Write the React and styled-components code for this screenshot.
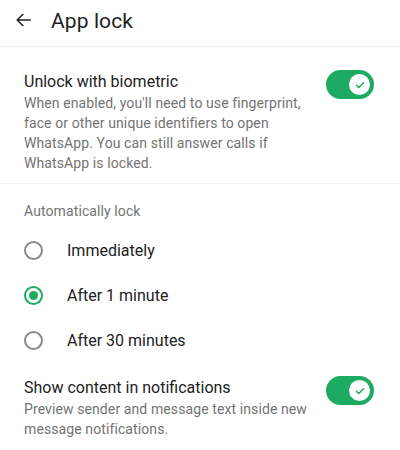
import styled, { createGlobalStyle } from "styled-components";

const GlobalStyle = createGlobalStyle`
  body {
    margin: 0;
    background: #ffffff;
    font-family: Roboto, "Noto Sans", sans-serif;
    color: #222222;
  }
`;

const Page = styled.div`
  width: 400px;
  height: 450px;
  overflow: hidden;
  background: #ffffff;
`;

const TopBar = styled.header`
  display: flex;
  align-items: center;
  height: 47px;
  padding: 0 0 0 14px;
  border-bottom: 1px solid #f1f1f1;
  box-sizing: border-box;
`;

const BackButton = styled.button`
  display: flex;
  align-items: center;
  justify-content: center;
  width: 20px;
  height: 20px;
  padding: 0;
  margin: -6px 17px 0 0;
  border: none;
  background: none;
  color: #222222;
`;

const Title = styled.h1`
  margin: -4px 0 0;
  font-size: 21px;
  font-weight: 400;
  letter-spacing: 0.1px;
  color: #222222;
`;

const Section = styled.section`
  display: flex;
  align-items: flex-start;
  gap: 16px;
  padding: ${(p) => p.$pad || "24px 24px 10px"};
  border-bottom: ${(p) => (p.$divider ? "1px solid #f1f1f1" : "none")};
`;

const TextBlock = styled.div`
  flex: 1;
`;

const ItemTitle = styled.div`
  font-size: 16px;
  line-height: 22px;
  color: #222222;
`;

const ItemDesc = styled.div`
  font-size: 14px;
  line-height: 20px;
  color: #737373;
  letter-spacing: 0.1px;
`;

const Track = styled.div`
  position: relative;
  flex-shrink: 0;
  width: 48px;
  height: 29px;
  margin-top: ${(p) => p.$top || 0}px;
  margin-right: 2px;
  border-radius: 15px;
  background: #1daa61;
`;

const Knob = styled.div`
  position: absolute;
  right: 4px;
  top: 4px;
  width: 21px;
  height: 21px;
  border-radius: 50%;
  background: #ffffff;
  display: flex;
  align-items: center;
  justify-content: center;
`;

const Group = styled.div`
  padding: 17px 0 0;
`;

const GroupLabel = styled.div`
  padding: 0 24px;
  font-size: 14px;
  line-height: 20px;
  color: #737373;
  letter-spacing: 0.1px;
`;

const Options = styled.div`
  display: flex;
  flex-direction: column;
  padding-top: 7px;
`;

const OptionRow = styled.label`
  display: flex;
  align-items: center;
  height: 45px;
  padding: 0 24px;
  gap: 24px;
  font-size: 16px;
  color: #222222;
`;

const Radio = styled.span`
  width: 19px;
  height: 19px;
  box-sizing: border-box;
  border-radius: 50%;
  border: 2px solid ${(p) => (p.$on ? "#1daa61" : "#8a8a8a")};
  display: flex;
  align-items: center;
  justify-content: center;

  &::after {
    content: "";
    display: ${(p) => (p.$on ? "block" : "none")};
    width: 9px;
    height: 9px;
    border-radius: 50%;
    background: #1daa61;
  }
`;

function Toggle({ top }) {
  return (
    <Track $top={top}>
      <Knob>
        <svg width="12" height="12" viewBox="0 0 24 24" fill="none">
          <path d="M5 12.5l4.5 4.5L19 7.5" stroke="#1daa61" strokeWidth="3" strokeLinecap="round" strokeLinejoin="round" />
        </svg>
      </Knob>
    </Track>
  );
}

export default function App() {
  const options = ["Immediately", "After 1 minute", "After 30 minutes"];
  const selected = 1;

  return (
    <Page>
      <GlobalStyle />
      <TopBar>
        <BackButton aria-label="Back">
          <svg width="18" height="18" viewBox="0 0 24 24" fill="none">
            <path d="M21 12H3.5M11 4l-8 8 8 8" stroke="#222222" strokeWidth="2" strokeLinejoin="miter" />
          </svg>
        </BackButton>
        <Title>App lock</Title>
      </TopBar>

      <Section $divider>
        <TextBlock>
          <ItemTitle>Unlock with biometric</ItemTitle>
          <ItemDesc>
            When enabled, you'll need to use fingerprint, face or other unique identifiers to open
            WhatsApp. You can still answer calls if WhatsApp is locked.
          </ItemDesc>
        </TextBlock>
        <Toggle top={-1} />
      </Section>

      <Group>
        <GroupLabel>Automatically lock</GroupLabel>
        <Options>
          {options.map((o, i) => (
            <OptionRow key={o}>
              <Radio $on={i === selected} />
              {o}
            </OptionRow>
          ))}
        </Options>
      </Group>

      <Section $pad="14px 24px 0">
        <TextBlock>
          <ItemTitle>Show content in notifications</ItemTitle>
          <ItemDesc>Preview sender and message text inside new message notifications.</ItemDesc>
        </TextBlock>
        <Toggle top={-1} />
      </Section>
    </Page>
  );
}
